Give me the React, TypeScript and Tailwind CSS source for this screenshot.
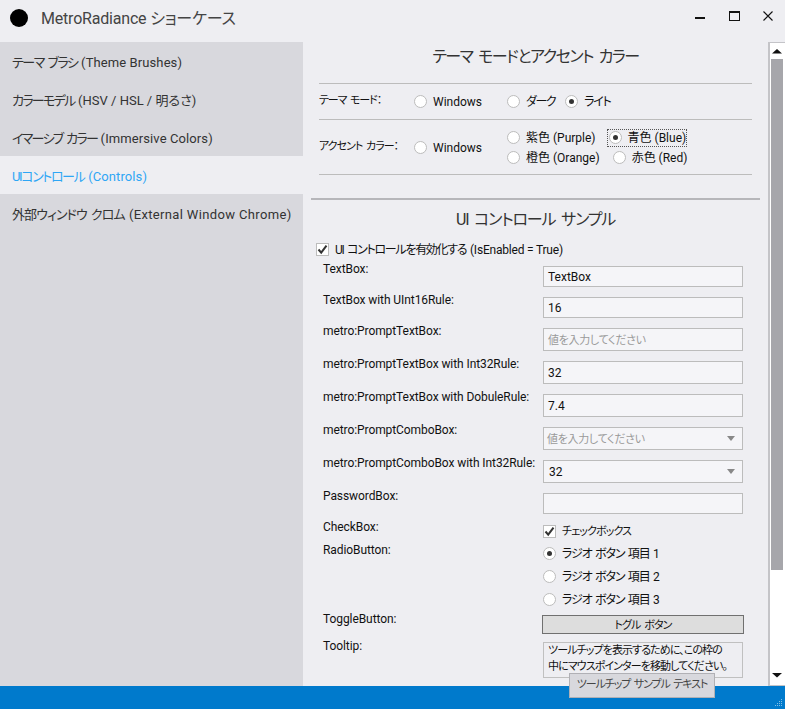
import React from "react";

const font = "font-['Roboto','Noto_Sans_CJK_JP',sans-serif] [font-feature-settings:'palt']";

function Radio({ on }: { on?: boolean }) {
  return (
    <span className="w-[13px] h-[13px] shrink-0 rounded-full bg-white border border-[#bcbcbc] flex items-center justify-center">
      {on && <span className="w-[5px] h-[5px] rounded-full bg-[#333333]" />}
    </span>
  );
}

function RadioItem({ label, on, className = "" }: { label: string; on?: boolean; className?: string }) {
  return (
    <div className={`flex items-center gap-[6px] text-[12px] leading-[16px] text-[#111] whitespace-nowrap ${className}`}>
      <Radio on={on} />
      <span>{label}</span>
    </div>
  );
}

function Check() {
  return (
    <span className="w-[13px] h-[13px] shrink-0 bg-white border border-[#bcbcbc] flex items-center justify-center">
      <svg width="11" height="11" viewBox="0 0 11 11">
        <path d="M1.5 5.5 L4.2 8.6 L9.5 1.6" fill="none" stroke="#333" strokeWidth="2" />
      </svg>
    </span>
  );
}

function Row({ label, h, pt, children }: { label: string; h: string; pt: string; children: React.ReactNode }) {
  return (
    <div className={`flex pl-[323px] ${h}`}>
      <div className="w-[220px] shrink-0 text-[12px] leading-[16px] text-[#111] whitespace-nowrap tracking-[-0.08px]">{label}</div>
      <div className={`w-[200px] shrink-0 ${pt}`}>{children}</div>
    </div>
  );
}

function Field({ text, h = "h-[21px]", muted }: { text?: string; h?: string; muted?: boolean }) {
  return (
    <div className={`${h} bg-[#f5f5f8] border border-[#bcbcbc] pl-[4px] flex items-center ${muted ? "pt-[3px] text-[11px] text-[#9a9a9a] tracking-[-0.3px]" : "text-[12px] text-[#111]"}`}>
      {text}
    </div>
  );
}

function Combo({ text, muted }: { text: string; muted?: boolean }) {
  return (
    <div className={`h-[23px] bg-[#f5f5f8] border border-[#bcbcbc] pr-[7px] flex items-center justify-between ${muted ? "pl-[3px] text-[11px] text-[#9a9a9a] tracking-[-0.3px]" : "pl-[5px] text-[12px] text-[#111]"}`}>
      <span className={muted ? "mt-[3px]" : ""}>{text}</span>
      <svg width="8" height="5" viewBox="0 0 8 5">
        <path d="M0 0 H8 L4 5 Z" fill="#888" />
      </svg>
    </div>
  );
}

const nav = [
  { jp: "テーマ ブラシ ", en: "(Theme Brushes)", tr: "tracking-[-1.5px]", etr: "tracking-[0.1px]" },
  { jp: "カラーモデル ", en: "(HSV / HSL / 明るさ)", tr: "tracking-[-1.7px]", etr: "tracking-[0px]" },
  { jp: "イマーシブ カラー ", en: "(Immersive Colors)", tr: "tracking-[-1.7px]", etr: "tracking-[0.1px]" },
  { jp: "UIコントロール ", en: "(Controls)", tr: "tracking-[-1.4px]", etr: "tracking-[0.1px]", active: true },
  { jp: "外部ウィンドウ クロム ", en: "(External Window Chrome)", tr: "tracking-[-0.95px]", etr: "tracking-[0.35px]" },
];

export default function App() {
  return (
    <div className={`relative w-[785px] h-[709px] overflow-hidden flex flex-col bg-[#eeeef2] ${font}`}>
      {/* Title bar */}
      <div className="h-[42px] shrink-0 flex items-center">
        <span className="ml-[10px] w-[18px] h-[18px] rounded-full bg-black -mt-[6px]" />
        <span className="ml-[13px] text-[16px] text-[#444444] whitespace-nowrap -mt-[5px] tracking-[-0.2px]">MetroRadiance ショーケース</span>
        <div className="ml-auto flex items-start -mt-[10px]">
          <svg width="12" height="12" viewBox="0 0 12 12" className="mr-[22px]">
            <rect x="1" y="7" width="10" height="2" fill="#111" />
          </svg>
          <svg width="12" height="12" viewBox="0 0 12 12" className="mr-[22px]">
            <rect x="1.5" y="1.5" width="10" height="9" fill="none" stroke="#111" strokeWidth="1" />
            <rect x="1" y="1" width="11" height="2" fill="#111" />
          </svg>
          <svg width="12" height="12" viewBox="0 0 12 12" className="mr-[11px]">
            <path d="M1.5 1.5 L10.5 10.5 M10.5 1.5 L1.5 10.5" stroke="#111" strokeWidth="1.1" fill="none" />
          </svg>
        </div>
      </div>

      {/* Body */}
      <div className="flex-1 min-h-0 flex">
        <div className="w-[303px] shrink-0 bg-[#d8d8dd]">
          {nav.map((n) => (
            <div
              key={n.jp}
              className={`h-[38px] pl-[12px] pt-[4px] flex items-center text-[13px] whitespace-pre ${n.active ? "bg-[#eeeef2] text-[#2ea6f5]" : "text-[#333333]"}`}
            >
              <span className={`${n.tr} [word-spacing:2px]`}>{n.jp}</span>
              <span className={n.etr}>{n.en}</span>
            </div>
          ))}
        </div>

        {/* Scrollable pane */}
        <div className="relative flex-1 min-w-0 flex overflow-hidden">
          <div className="flex-1 min-w-0 overflow-hidden -ml-[303px]">
            <div className="h-[29px] pl-[303px] flex justify-center items-center">
              <span className="text-[16px] text-[#333333] whitespace-nowrap tracking-[-1.45px] [word-spacing:3px]">テーマ モードとアクセント カラー</span>
            </div>
            <div className="h-[12px]" />
            <div className="ml-[319px] w-[433px] border-t border-[#bcbcbc]" />
            <div className="ml-[319px] w-[433px] h-[36px] flex items-center border-b border-[#bcbcbc]">
              <span className="w-[95px] text-[11px] text-[#111] whitespace-nowrap tracking-[-1.1px] [word-spacing:2px]">テーマ モード：</span>
              <RadioItem label="Windows" />
              <RadioItem label="ダーク" className="ml-[25px] tracking-[-1.5px]" />
              <RadioItem label="ライト" on className="ml-[10px] tracking-[-1.2px]" />
            </div>
            <div className="ml-[319px] w-[433px] h-[55px] pt-[1px] flex items-center border-b border-[#bcbcbc]">
              <span className="w-[95px] text-[11px] text-[#111] whitespace-nowrap tracking-[-1px] [word-spacing:2px]">アクセント カラー：</span>
              <RadioItem label="Windows" />
              <div className="ml-[25px] flex flex-col gap-[4px]">
                <div className="flex items-center">
                  <RadioItem label="紫色 (Purple)" />
                  <RadioItem label="青色 (Blue)" on className="ml-[12px] pl-[1px] outline-1 outline-dotted outline-[#555]" />
                </div>
                <div className="flex items-center">
                  <RadioItem label="橙色 (Orange)" />
                  <RadioItem label="赤色 (Red)" className="ml-[13px]" />
                </div>
              </div>
            </div>
            <div className="h-[23px]" />
            <div className="ml-[311px] w-[449px] h-[2px] bg-[#b6b6ba]" />
            <div className="pl-[303px] pt-[4px] h-[36px] flex items-center justify-center">
              <span className="text-[16px] text-[#333333] whitespace-nowrap tracking-[-1.15px] [word-spacing:3px]">UI コントロール サンプル</span>
            </div>
            <div className="ml-[316px] h-[25px] flex items-start gap-[6px] pt-[7px] text-[12px] leading-[16px] text-[#111] whitespace-pre">
              <Check />
              <span className="-mt-[1px]">
                <span className="tracking-[-1.3px] [word-spacing:2px]">UI コントロールを有効化する </span>
                <span className="tracking-[-0.2px]">(IsEnabled = True)</span>
              </span>
            </div>

            <Row label="TextBox:" h="h-[31px]" pt="pt-[5px]"><Field text="TextBox" /></Row>
            <Row label="TextBox with UInt16Rule:" h="h-[31px]" pt="pt-[5px]"><Field text="16" /></Row>
            <Row label="metro:PromptTextBox:" h="h-[33px]" pt="pt-[5px]"><Field text="値を入力してください" h="h-[23px]" muted /></Row>
            <Row label="metro:PromptTextBox with Int32Rule:" h="h-[33px]" pt="pt-[5px]"><Field text="32" h="h-[23px]" /></Row>
            <Row label="metro:PromptTextBox with DobuleRule:" h="h-[33px]" pt="pt-[5px]"><Field text="7.4" h="h-[23px]" /></Row>
            <Row label="metro:PromptComboBox:" h="h-[33px]" pt="pt-[5px]"><Combo text="値を入力してください" muted /></Row>
            <Row label="metro:PromptComboBox with Int32Rule:" h="h-[33px]" pt="pt-[5px]"><Combo text="32" /></Row>
            <Row label="PasswordBox:" h="h-[31px]" pt="pt-[5px]"><Field /></Row>
            <Row label="CheckBox:" h="h-[23px]" pt="pt-[6px]">
              <div className="flex items-center gap-[6px] text-[11px] leading-[13px] text-[#111] whitespace-nowrap tracking-[-0.9px]">
                <Check />
                <span>チェックボックス</span>
              </div>
            </Row>
            <Row label="RadioButton:" h="h-[69px]" pt="pt-0">
              <div className="flex flex-col">
                <RadioItem label="ラジオ ボタン 項目 1" on className="h-[23px] tracking-[-1.1px] [word-spacing:1.5px]" />
                <RadioItem label="ラジオ ボタン 項目 2" className="h-[23px] tracking-[-1.1px] [word-spacing:1.5px]" />
                <RadioItem label="ラジオ ボタン 項目 3" className="h-[23px] tracking-[-1.1px] [word-spacing:1.5px]" />
              </div>
            </Row>
            <Row label="ToggleButton:" h="h-[27px]" pt="pt-[4px]">
              <div className="-mx-[1px] h-[19px] pt-[3px] bg-[#dddddd] border border-[#707070] flex items-center justify-center text-[11px] tracking-[-0.9px] [word-spacing:2px] text-[#111]">
                トグル ボタン
              </div>
            </Row>
            <Row label="Tooltip:" h="h-[48px]" pt="pt-[4px]">
              <div className="h-[36px] border border-[#c0c0c0] pl-[4px] text-[11px] leading-[16px] tracking-[-0.9px] text-[#111] whitespace-nowrap">
                ツールチップを表示するために、この枠の<br />中にマウスポインターを移動してください。
              </div>
            </Row>
          </div>

          {/* Scrollbar */}
          <div className="w-[17px] shrink-0 bg-white border-l-2 border-t border-b border-[#c4c4c8] flex flex-col items-start relative">
            <svg width="12" height="16" viewBox="0 0 12 16" className="ml-[1px]">
              <path d="M1 10.5 L6 6 L11 10.5 Z" fill="#111" />
            </svg>
            <div className="ml-[1px] w-[12px] h-[511px] bg-[#a6a6ab]" />
            <svg width="12" height="12" viewBox="0 0 12 12" className="ml-[1px] mt-auto mb-[3px]">
              <path d="M1 3 L6 7.5 L11 3 Z" fill="#111" />
            </svg>
          </div>
        </div>
      </div>

      {/* Status bar */}
      <div className="h-[23px] shrink-0 bg-[#007acc] relative">
        <svg width="10" height="10" viewBox="0 0 10 10" className="absolute right-[1px] bottom-[1px]">
          <g fill="#7fbfe6">
            <rect x="7" y="1" width="1" height="1" /><rect x="5" y="3" width="1" height="1" /><rect x="7" y="3" width="1" height="1" />
            <rect x="3" y="5" width="1" height="1" /><rect x="5" y="5" width="1" height="1" /><rect x="7" y="5" width="1" height="1" />
            <rect x="1" y="7" width="1" height="1" /><rect x="3" y="7" width="1" height="1" /><rect x="5" y="7" width="1" height="1" /><rect x="7" y="7" width="1" height="1" />
          </g>
        </svg>
      </div>

      {/* Tooltip */}
      <div className="absolute left-[569px] top-[673px] w-[146px] h-[25px] bg-[#d8d8dd] border border-[#b0b0b5] flex items-center justify-center text-[11px] tracking-[-1.1px] [word-spacing:2px] text-[#444444] whitespace-nowrap">
        ツールチップ サンプル テキスト
      </div>
    </div>
  );
}
